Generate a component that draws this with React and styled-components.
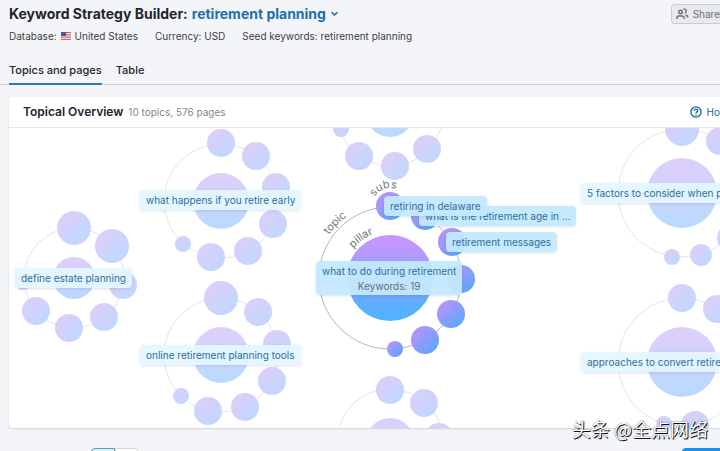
import React, { useState } from 'react';
import styled, { createGlobalStyle, css } from 'styled-components';

const GlobalStyle = createGlobalStyle`
  * {
    box-sizing: border-box;
  }
  body {
    margin: 0;
    background: #f4f5f9;
    color: #22252e;
    font-family: Inter, 'Liberation Sans', sans-serif;
    font-size: 10px;
    line-height: 16px;
  }
  button, select {
    font: inherit;
    color: inherit;
  }
`;

const Page = styled.div`
  position: relative;
  height: 100vh;
  overflow: hidden;
`;

const Header = styled.header`
  display: flex;
  justify-content: space-between;
  padding: 4px 0 0 9px;
`;

const Title = styled.h1`
  display: flex;
  align-items: center;
  gap: 4px;
  margin: 0;
  font-size: 14px;
  font-weight: 700;
  line-height: 20px;
  white-space: nowrap;
`;

const ListButton = styled.button`
  display: flex;
  align-items: center;
  gap: 4px;
  padding: 0;
  border: none;
  background: none;
  color: #1b6fae;
  cursor: pointer;
`;

const ShareButton = styled.button`
  display: flex;
  align-items: center;
  gap: 4px;
  height: 20px;
  padding: 0 0 0 4px;
  border: 1px solid #c9cbd2;
  border-right: none;
  border-radius: 4px 0 0 4px;
  background: #e9eaee;
  color: #6c6e79;
`;

const Meta = styled.div`
  display: flex;
  gap: 17px;
  padding: 4px 9px 0;
  color: #3a3d46;
  white-space: nowrap;
`;

const MetaItem = styled.span`
  display: flex;
  align-items: center;
  gap: 4px;
`;

const Tabs = styled.nav`
  display: flex;
  gap: 14px;
  margin-top: 13px;
  padding-left: 9px;
  border-bottom: 1px solid #cfd1d8;
`;

const Tab = styled.button`
  height: 28px;
  margin-bottom: -1px;
  padding: 0;
  border: none;
  border-bottom: 2px solid ${({ $active }) => ($active ? '#3079a8' : 'transparent')};
  background: none;
  font-size: 11px;
  font-weight: 500;
  cursor: pointer;
`;

const Card = styled.section`
  margin: 12px 0 0 9px;
  border-radius: 4px 0 0 4px;
  background: #fff;
  box-shadow: 0 1px 2px rgba(25, 27, 35, 0.16);
  overflow: hidden;
`;

const CardHeader = styled.div`
  display: flex;
  align-items: center;
  height: 31px;
  padding-left: 14px;
  border-bottom: 1px solid #e6e7eb;
`;

const CardTitle = styled.h2`
  margin: 0 5px 0 0;
  font-size: 12px;
  font-weight: 600;
`;

const Count = styled.span`
  flex: 1;
  color: #83858f;
`;

const HelpLink = styled.a`
  display: flex;
  align-items: center;
  gap: 5px;
  color: #1b6a94;
  text-decoration: none;
`;

const Canvas = styled.div`
  position: relative;
  height: 300px;
  overflow: hidden;
`;

const Bubbles = styled.svg`
  display: block;
  width: 100%;
  height: 100%;
`;

const Ring = styled.circle`
  fill: none;
  stroke: ${({ $active }) => ($active ? '#b4b5ba' : '#e4e4ea')};
`;

const ArcText = styled.text`
  fill: #74757c;
  font-size: 11px;
`;

const Label = styled.div`
  position: absolute;
  left: ${({ $x }) => $x}px;
  top: ${({ $y }) => $y}px;
  padding: 2px 6px;
  border-radius: 4px;
  background: rgba(228, 246, 255, 0.92);
  box-shadow: 0 1px 3px rgba(25, 59, 80, 0.14);
  color: #2b6f9c;
  line-height: 16px;
  text-align: center;
  white-space: nowrap;
  ${({ $active }) => $active && css`
    background: rgba(196, 233, 254, 0.94);
  `}
  ${({ $clipped }) => $clipped && css`
    right: 0;
    padding-right: 0;
    border-radius: 4px 0 0 4px;
    text-align: left;
  `}
`;

const LabelCount = styled.div`
  color: #63707c;
  line-height: 14px;
`;

const Toolbar = styled.div`
  display: flex;
  justify-content: space-between;
  margin-top: 20px;
  padding-left: 91px;
`;

const Segments = styled.div`
  display: flex;
`;

const Segment = styled.button`
  width: 24px;
  height: 24px;
  border: 1px solid ${({ $active }) => ($active ? '#5b9cb8' : '#d3d5db')};
  border-radius: ${({ $active }) => ($active ? '4px 0 0 4px' : '0 4px 4px 0')};
  background: ${({ $active }) => ($active ? '#dceef7' : '#fff')};
`;

const PrimaryButton = styled.button`
  width: 38px;
  height: 24px;
  border: none;
  border-radius: 4px 0 0 4px;
  background: #1a8fe8;
`;

const Watermark = styled.div`
  position: absolute;
  right: 12px;
  bottom: 10px;
  color: #fff;
  font-family: 'Noto Sans CJK SC', sans-serif;
  font-size: 19px;
  line-height: 24px;
  text-shadow: 1px 1px 0 #111, 0 0 1px #333;
`;

const clusters = [
  { x: 65, y: 150, r: 21, ring: 50, subs: [[65, 100, 17], [103, 118, 17], [114, 157, 14], [95, 189, 14], [60, 200, 14], [27, 183, 14], [14, 154, 8]] },
  { x: 212, y: 73, r: 28, ring: 57, subs: [[212, 15, 14], [247, 28, 14], [267, 59, 14], [264, 96, 14], [239, 123, 14], [202, 129, 14], [174, 116, 8]] },
  { x: 212, y: 227, r: 28, ring: 57, subs: [[212, 170, 17], [249, 184, 14], [268, 216, 14], [263, 253, 14], [236, 279, 14], [199, 283, 14], [172, 268, 8]] },
  { x: 381, y: -15, r: 24, ring: 53, subs: [[332, 1, 8], [350, 28, 14], [386, 38, 14], [418, 21, 14]] },
  { x: 381, y: 314, r: 24, ring: 53, subs: [[381, 262, 14], [415, 275, 14], [430, 309, 14]] },
  { x: 673, y: 65, r: 35, ring: 64, subs: [[673, 1, 17], [711, 13, 14], [663, 129, 8], [692, 127, 11], [722, 110, 14]] },
  { x: 673, y: 234, r: 35, ring: 64, subs: [[673, 170, 14], [708, 181, 14], [727, 266, 14], [686, 297, 14], [655, 296, 8]] },
  { x: 381, y: 150, r: 43, ring: 71, active: true, subs: [[381, 78, 14], [416, 88, 14], [443, 114, 14], [452, 151, 14], [442, 186, 14], [416, 212, 14], [386, 221, 8]] },
];

const labels = [
  { x: 6, y: 140, text: 'define estate planning' },
  { x: 131, y: 62, text: 'what happens if you retire early' },
  { x: 131, y: 217, text: 'online retirement planning tools' },
  { x: 572, y: 55, text: '5 factors to consider when p', clipped: true },
  { x: 572, y: 224, text: 'approaches to convert retire', clipped: true },
  { x: 410, y: 78, text: 'what is the retirement age in ...', active: true },
  { x: 375, y: 68, text: 'retiring in delaware', active: true },
  { x: 437, y: 104, text: 'retirement messages', active: true },
  { x: 307, y: 133, text: 'what to do during retirement', count: 19, active: true },
];

// angle is where the middle of the word sits, clockwise from the right
const arcs = [
  { id: 'topic', x: 381, y: 150, r: 75, angle: 225 },
  { id: 'pillar', x: 381, y: 150, r: 47, angle: 234 },
  { id: 'subs', x: 381, y: 78, r: 18, angle: 250 },
];

const arcPath = ({ x, y, r, angle }) => {
  const point = (deg) => {
    const rad = (deg * Math.PI) / 180;
    return `${x + r * Math.cos(rad)} ${y + r * Math.sin(rad)}`;
  };
  return `M ${point(angle - 80)} A ${r} ${r} 0 0 1 ${point(angle + 80)}`;
};

const Flag = () => (
  <svg width="10" height="8" viewBox="0 0 10 8" aria-hidden="true">
    <rect width="10" height="8" fill="#f3dfe4" />
    <path d="M0 .5h10M0 2.8h10M0 5.1h10M0 7.4h10" stroke="#d2566a" />
    <rect width="5" height="4" fill="#4a58a0" />
  </svg>
);

const ChevronIcon = () => (
  <svg width="9" height="6" viewBox="0 0 9 6" fill="none" stroke="currentColor" strokeWidth="1.5" aria-hidden="true">
    <path d="M1.5 1.2 4.5 4l3-2.8" />
  </svg>
);

const ShareIcon = () => (
  <svg width="13" height="12" viewBox="0 0 13 12" fill="none" stroke="currentColor" strokeWidth="1.4" aria-hidden="true">
    <circle cx="4.5" cy="4" r="1.8" />
    <path d="M1 11V9.8C1 8.6 2 8 3 8h3c1 0 2 .6 2 1.8V11M7.5 1.3h1.2c1 0 1.5.7 1.5 1.6 0 1.1-.6 1.9-1.5 2.1M9.5 7.2c1.5 0 2.3.8 2.3 2.3" />
  </svg>
);

const HelpIcon = () => (
  <svg width="12" height="12" viewBox="0 0 12 12" fill="none" stroke="currentColor" strokeWidth="1.4" aria-hidden="true">
    <circle cx="6" cy="6" r="5.1" />
    <path d="M4.3 4.8c0-2.3 3.5-2.1 3.5-.1C7.8 5.9 6 5.900 6 7.2M6 8.2v1.2" />
  </svg>
);

const TopicMap = () => (
  <Canvas>
    <Bubbles>
      <defs>
        <linearGradient id="pillarFill" x1="0" y1="0" x2="0" y2="1">
          <stop offset="0.1" stopColor="#c596ff" />
          <stop offset="0.9" stopColor="#55b0ff" />
        </linearGradient>
        <linearGradient id="subFill" x1="0.1" y1="0.1" x2="0.8" y2="0.9">
          <stop offset="0.1" stopColor="#b494fa" />
          <stop offset="1" stopColor="#5fa6fc" />
        </linearGradient>
        <linearGradient id="pillarPale" x1="0" y1="0" x2="0" y2="1">
          <stop offset="0.1" stopColor="#dccffb" />
          <stop offset="0.9" stopColor="#bbd9ff" />
        </linearGradient>
        <linearGradient id="subPale" x1="0.1" y1="0.1" x2="0.8" y2="0.9">
          <stop offset="0.1" stopColor="#dacffa" />
          <stop offset="1" stopColor="#c1d7fe" />
        </linearGradient>
      </defs>
      {clusters.map(({ x, y, r, ring, subs, active }) => (
        <g key={`${x}-${y}`}>
          <Ring cx={x} cy={y} r={ring} $active={active} />
          <circle cx={x} cy={y} r={r} fill={active ? 'url(#pillarFill)' : 'url(#pillarPale)'} />
          {subs.map(([cx, cy, size]) => (
            <circle key={`${cx}-${cy}`} cx={cx} cy={cy} r={size} fill={active ? 'url(#subFill)' : 'url(#subPale)'} />
          ))}
        </g>
      ))}
      {arcs.map((arc) => (
        <React.Fragment key={arc.id}>
          <path id={arc.id} d={arcPath(arc)} fill="none" />
          <ArcText textAnchor="middle">
            <textPath href={`#${arc.id}`} startOffset="50%">{arc.id}</textPath>
          </ArcText>
        </React.Fragment>
      ))}
    </Bubbles>
    {labels.map(({ x, y, text, count, active, clipped }) => (
      <Label key={text} $x={x} $y={y} $active={active} $clipped={clipped}>
        {text}
        {count && <LabelCount>Keywords: {count}</LabelCount>}
      </Label>
    ))}
  </Canvas>
);

const App = () => {
  const [tab, setTab] = useState('Topics and pages');

  return (
    <Page>
      <GlobalStyle />
      <Header>
        <Title>
          Keyword Strategy Builder:
          <ListButton>
            retirement planning
            <ChevronIcon />
          </ListButton>
        </Title>
        <ShareButton>
          <ShareIcon />
          Share
        </ShareButton>
      </Header>
      <Meta>
        <MetaItem>Database: <Flag /> United States</MetaItem>
        <MetaItem>Currency: USD</MetaItem>
        <MetaItem>Seed keywords: retirement planning</MetaItem>
      </Meta>
      <Tabs>
        {['Topics and pages', 'Table'].map((name) => (
          <Tab key={name} $active={tab === name} onClick={() => setTab(name)}>{name}</Tab>
        ))}
      </Tabs>
      <Card>
        <CardHeader>
          <CardTitle>Topical Overview</CardTitle>
          <Count>10 topics, 576 pages</Count>
          <HelpLink href="#help"><HelpIcon />Ho</HelpLink>
        </CardHeader>
        <TopicMap />
      </Card>
      <Toolbar>
        <Segments>
          <Segment aria-label="Map view" $active />
          <Segment aria-label="List view" />
        </Segments>
        <PrimaryButton aria-label="Create" />
      </Toolbar>
      <Watermark>头条 @全点网络</Watermark>
    </Page>
  );
};

export default App;
